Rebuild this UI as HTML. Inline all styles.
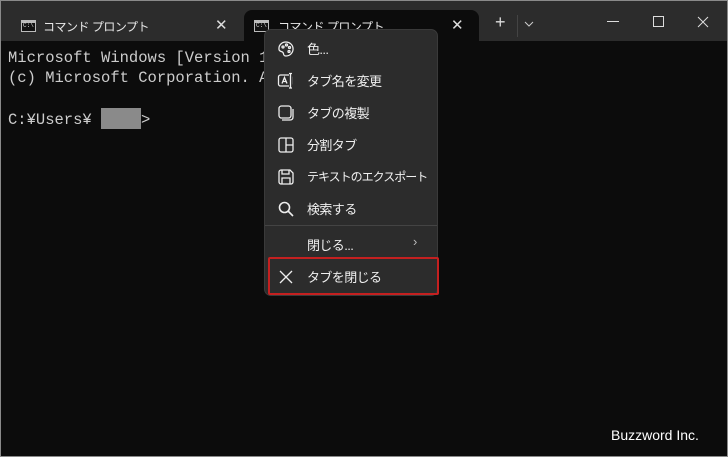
<!DOCTYPE html>
<html><head><meta charset="utf-8"><style>
*{margin:0;padding:0;box-sizing:border-box}
body{width:728px;height:457px;overflow:hidden;background:#8a8a8a;font-family:"Liberation Sans","Noto Sans CJK JP",sans-serif;position:relative}
.win{position:absolute;left:1px;top:1px;width:726px;height:455px;background:#0c0c0c}
.title{position:absolute;left:0;top:0;width:726px;height:40px;background:#2c2c2c}
.tab{position:absolute;top:9px;height:31px;color:#e8e8e8;font-size:12px;white-space:nowrap}
.tab .t{position:absolute;left:42px;top:8px;letter-spacing:-0.5px}
.tab .x{position:absolute;top:6px;font-size:15px;color:#ddd}
.ico{position:absolute;left:20px;top:10px;width:15px;height:12px;border:1px solid #bbb;background:#111}
.ico:before{content:"";position:absolute;left:0;top:0;right:0;height:2px;background:#bbb}
.ico:after{content:"C:\\";position:absolute;left:1px;top:1px;font-size:6px;color:#ddd;font-family:"Liberation Mono",monospace}
.active{left:243px;width:235px;background:#0c0c0c;border-radius:8px 8px 0 0}
.con{position:absolute;left:7px;top:47px;font-family:"Liberation Mono",monospace;font-size:15.5px;line-height:20px;color:#cccccc;white-space:pre}
.gray{display:inline-block;width:40px;height:21px;background:#8a8a8a;vertical-align:-5px}
.menu{position:absolute;left:264px;top:29px;width:174px;height:267px;background:#2c2c2c;border-radius:7px;border:1px solid #3a3a3a}
.item{position:absolute;left:0;width:172px;height:32px;color:#f0f0f0;font-size:13px;white-space:nowrap}
.item .l{position:absolute;left:42px;top:7px;letter-spacing:-0.6px}
.item svg{position:absolute;left:12px;top:8px}
.sep{position:absolute;left:0;top:195px;width:172px;height:1px;background:#444}
.red{position:absolute;left:268px;top:257px;width:171px;height:38px;border:2px solid #c42020;border-radius:2px}
.wm{position:absolute;left:611px;top:427px;color:#fff;font-size:14px}
</style></head><body>
<div class="win">
<div class="title">
 <div class="tab" style="left:0;width:242px"><div class="ico"></div><span class="t">コマンド プロンプト</span><span class="x" style="left:214px">✕</span></div>
 <div class="tab active"><div class="ico" style="left:10px"></div><span class="t" style="left:34px">コマンド プロンプト</span><span class="x" style="left:207px">✕</span></div>
 <div style="position:absolute;left:494px;top:11px;color:#ddd;font-size:18px">+</div>
 <div style="position:absolute;left:516px;top:14px;width:1px;height:22px;background:#444"></div>
 <svg style="position:absolute;left:523px;top:20px" width="10" height="6"><path d="M1 1 L5 5 L9 1" stroke="#ccc" fill="none"/></svg>
 <div style="position:absolute;left:606px;top:20px;width:12px;height:1px;background:#ddd"></div>
 <div style="position:absolute;left:652px;top:15px;width:11px;height:11px;border:1px solid #ddd"></div>
 <svg style="position:absolute;left:696px;top:15px" width="12" height="12"><path d="M1 1L11 11M11 1L1 11" stroke="#ddd"/></svg>
</div>
<div class="con">Microsoft Windows [Version 10
(c) Microsoft Corporation. Al

C:¥Users¥ <span class="gray"></span>&gt;</div>
</div>
<div class="menu">
 <div class="item" style="top:2px"><svg width="18" height="18" fill="none" stroke="#eee" stroke-width="1.3"><path d="M9 2C4 2 1.5 6 2 9.5 2.5 12 5 11 6 12.5 7 14 6 16 9 16 13.5 16 16.5 12 16 8 15.5 4.5 12.5 2 9 2Z"/><circle cx="6" cy="7" r="1"/><circle cx="9.5" cy="5" r="1"/><circle cx="12.5" cy="7.5" r="1"/><circle cx="12" cy="11.5" r="1"/></svg><span class="l">色...</span></div>
 <div class="item" style="top:34px"><svg width="18" height="18" fill="none" stroke="#eee" stroke-width="1.3"><rect x="1.5" y="3" width="13" height="11" rx="2"/><path d="M5 11.5L7.5 5.5 10 11.5M6 9.5H9"/><path d="M12 1.5H15M13.5 1.5V16M12 16H15" stroke="#2c2c2c" stroke-width="3"/><path d="M12 1.5H15M13.5 1.5V16M12 16H15"/></svg><span class="l">タブ名を変更</span></div>
 <div class="item" style="top:66px"><svg width="18" height="18" fill="none" stroke="#eee" stroke-width="1.3"><rect x="2" y="2" width="12" height="12" rx="2.5"/><path d="M16 5V13C16 15 15 16 13 16H5"/></svg><span class="l">タブの複製</span></div>
 <div class="item" style="top:98px"><svg width="18" height="18" fill="none" stroke="#eee" stroke-width="1.3"><rect x="2" y="2" width="14" height="14" rx="2"/><path d="M9 2V9H16M9 9V16" /></svg><span class="l">分割タブ</span></div>
 <div class="item" style="top:130px"><svg width="18" height="18" fill="none" stroke="#eee" stroke-width="1.3"><path d="M2 4C2 3 3 2 4 2H13L16 5V14C16 15 15 16 14 16H4C3 16 2 15 2 14Z"/><path d="M5 2V6H12V2M5 16V10H13V16"/></svg><span class="l" style="letter-spacing:-1px;font-size:12px;top:8px">テキストのエクスポート</span></div>
 <div class="item" style="top:162px"><svg width="18" height="18" fill="none" stroke="#eee" stroke-width="1.6"><circle cx="7.5" cy="7.5" r="5"/><path d="M11 11L16 16"/></svg><span class="l">検索する</span></div>
 <div class="sep"></div>
 <div class="item" style="top:198px"><span class="l">閉じる...</span><span style="position:absolute;left:148px;top:6px;color:#bbb;font-size:13px">›</span></div>
 <div class="item" style="top:230px"><svg width="18" height="18" fill="none" stroke="#eee" stroke-width="1.3"><path d="M3 3L15 15M15 3L3 15"/></svg><span class="l">タブを閉じる</span></div>
</div>
<div class="red"></div>
<div class="wm">Buzzword Inc.</div>
</body></html>
